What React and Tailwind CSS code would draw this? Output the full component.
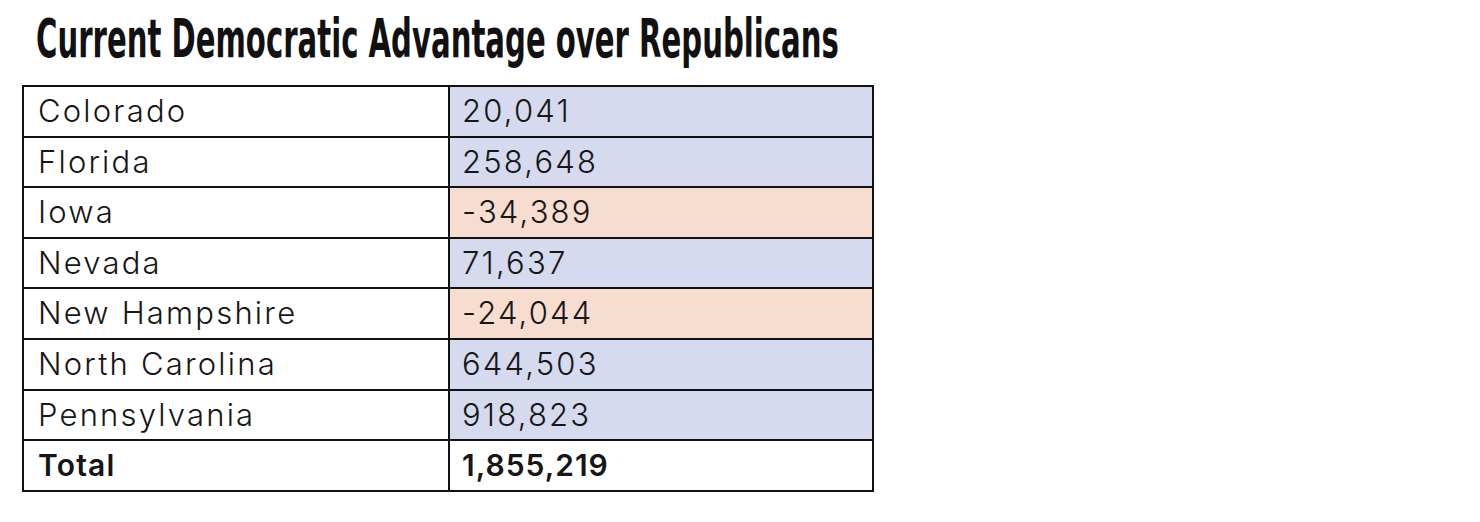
import React from 'react';

const rows = [
  { state: 'Colorado', value: '20,041', tone: 'blue' },
  { state: 'Florida', value: '258,648', tone: 'blue' },
  { state: 'Iowa', value: '-34,389', tone: 'red' },
  { state: 'Nevada', value: '71,637', tone: 'blue' },
  { state: 'New Hampshire', value: '-24,044', tone: 'red' },
  { state: 'North Carolina', value: '644,503', tone: 'blue' },
  { state: 'Pennsylvania', value: '918,823', tone: 'blue' },
];

const App = () => {
  return (
    <div className="w-[1480px] h-[522px] bg-white text-[#161616] font-['Inter','Open_Sans',sans-serif]">
      {/* Title */}
      <div className="pl-[36px] pt-[7px] h-[85px]">
        <h1 className="origin-left scale-x-[0.6] whitespace-nowrap font-['DejaVu_Sans',sans-serif] font-stretch-condensed font-bold text-[54px] leading-[64px] text-[#111]">
          Current Democratic Advantage over Republicans
        </h1>
      </div>

      {/* Table */}
      <div className="ml-[22px] w-[852px] border-2 border-[#111]">
        {rows.map((row, i) => (
          <div key={row.state} className={`flex ${i > 0 ? 'h-[50.6px] border-t-2 border-[#111]' : 'h-[48.6px]'}`}>
            <div className="w-[426px] border-r-2 border-[#111] pl-[14px] flex items-center text-[31px] font-light tracking-[2.2px]">
              {row.state}
            </div>
            <div
              className={`flex-1 pl-[12px] flex items-center text-[31px] font-light tracking-[2.2px] ${
                row.tone === 'red' ? 'bg-[#f7dcd0]' : 'bg-[#d5daee]'
              }`}
            >
              {row.value}
            </div>
          </div>
        ))}
        <div className="flex h-[50.6px] border-t-2 border-[#111] font-semibold">
          <div className="w-[426px] border-r-2 border-[#111] pl-[14px] flex items-center text-[30px] tracking-[1.2px]">
            Total
          </div>
          <div className="flex-1 pl-[12px] flex items-center text-[30px] tracking-[1px]">1,855,219</div>
        </div>
      </div>
    </div>
  );
};

export default App;
